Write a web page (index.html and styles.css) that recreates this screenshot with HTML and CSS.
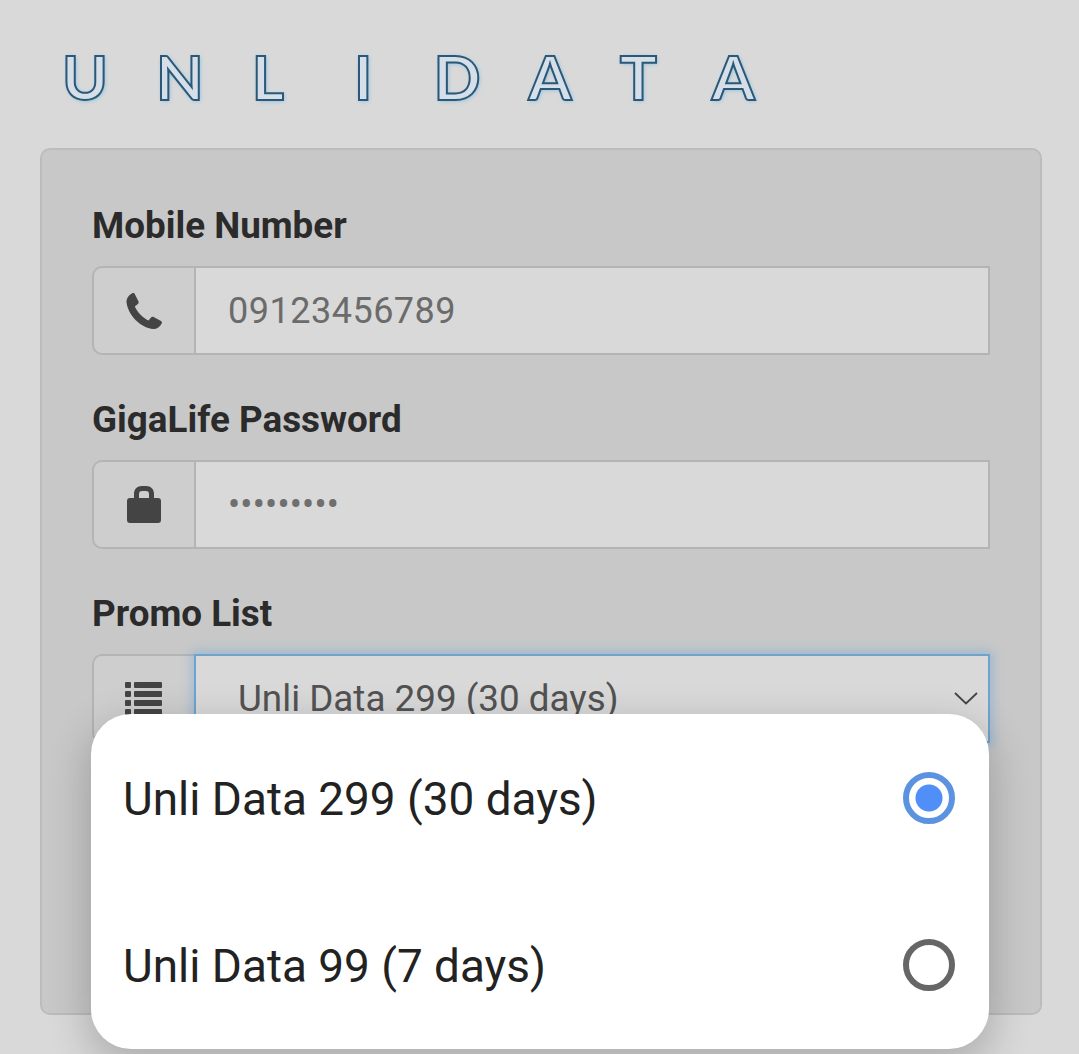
FILE: index.html
```html
<!DOCTYPE html>
<html lang="en">
<head>
    <meta charset="UTF-8">
    <title>Unli Data</title>
    <link rel="stylesheet" href="styles.css">
</head>
<body>
    <div class="page">
        <h1 class="title">UN<span class="gap-l">L</span><span class="gap-i">I</span>DA<span class="gap-t">T</span>A</h1>
        <form class="card">
            <div class="field">
                <div class="label">Mobile Number</div>
                <div class="group">
                    <div class="prepend">
                        <svg class="icon" width="36" height="36" viewBox="0 0 36 36"><path d="M8.5 .6 L12.5 8.500 c.5 1-.2 2-1.200 2.900 L8.800 13.500 C11.500 19.500 17 25 22.500 27.500 l2.100-2.500 c1-1 2-1.500 3-1 L35 28 c1 .6 1.200 1.400.7 2.400 C34 33.800 31 36 27.500 36 C14 35 1.500 21 .5 9 C.3 5.500 2.500 2.500 5.800 .5 C6.800 0 7.900 -.1 8.500 .6z"/></svg>
                    </div>
                    <div class="control placeholder">09123456789</div>
                </div>
            </div>
            <div class="field">
                <div class="label">GigaLife Password</div>
                <div class="group">
                    <div class="prepend">
                        <svg class="icon" width="34" height="37" viewBox="0 0 34 37"><path fill-rule="evenodd" d="M3 12h4V8c0-5 3-8 8-8h4c5 0 8 3 8 8v4h4c2 0 3 1 3 3v19c0 2-1 3-3 3H3c-2 0-3-1-3-3V15c0-2 1-3 3-3zM12 12h10V8c0-2-1-3-3-3h-4c-2 0-3 1-3 3z"/></svg>
                    </div>
                    <div class="control dots">•••••••••</div>
                </div>
            </div>
            <div class="field">
                <div class="label">Promo List</div>
                <div class="group">
                    <div class="prepend prepend-top">
                        <svg class="icon" width="37" height="42" viewBox="0 0 37 42">
                            <rect x="0" y="0" width="6" height="6" rx="1"/><rect x="9" y="0" width="28" height="6" rx="1"/>
                            <rect x="0" y="9" width="6" height="6" rx="1"/><rect x="9" y="9" width="28" height="6" rx="1"/>
                            <rect x="0" y="18" width="6" height="6" rx="1"/><rect x="9" y="18" width="28" height="6" rx="1"/>
                            <rect x="0" y="27" width="6" height="6" rx="1"/><rect x="9" y="27" width="28" height="6" rx="1"/>
                        </svg>
                    </div>
                    <div class="control select">
                        <span>Unli Data 299 (30 days)</span>
                        <svg width="24" height="13" viewBox="0 0 24 13"><path d="M1 1l11 10.500L23 1" fill="none" stroke="#444" stroke-width="1.800"/></svg>
                    </div>
                </div>
            </div>
        </form>
        <div class="menu">
            <div class="option">
                <span>Unli Data 299 (30 days)</span>
                <span class="radio checked"></span>
            </div>
            <div class="option">
                <span>Unli Data 99 (7 days)</span>
                <span class="radio"></span>
            </div>
        </div>
    </div>
</body>
</html>
```

FILE: styles.css
```css
*{
    margin: 0;
    padding: 0;
    box-sizing: border-box;
}
body{
    height: 1054px;
    overflow: hidden;
    background-color: #d9d9d9;
    font-family: Roboto, "Liberation Sans", sans-serif;
}
.page{
    position: relative;
    height: 1054px;
    padding: 0 37px 0 40px;
}
.title{
    height: 148px;
    padding: 36px 0 0 22px;
    font-family: Lato, sans-serif;
    font-size: 62px;
    line-height: 80px;
    font-weight: 700;
    font-kerning: none;
    letter-spacing: 48px;
    white-space: nowrap;
    color: #d6dfe7;
    -webkit-text-stroke: 2px #2a5878;
    text-shadow: 1px 1px 4px #86bde2;
}
.gap-l{
    letter-spacing: 70px;
}
.gap-i{
    letter-spacing: 61px;
}
.gap-t{
    letter-spacing: 55px;
}
.card{
    height: 867px;
    padding: 55px 50px 0;
    background-color: #c8c8c8;
    border: 2px solid #bcbcbc;
    border-radius: 10px;
}
.field{
    margin-bottom: 44px;
}
.label{
    height: 42px;
    margin-bottom: 19px;
    font-size: 36.800px;
    line-height: 42px;
    font-weight: 700;
    color: #2b2b2b;
}
.group{
    display: flex;
    height: 89px;
}
.prepend{
    display: flex;
    align-items: center;
    justify-content: center;
    width: 102px;
    padding-right: 1px;
    background-color: #cecece;
    border: 2px solid #b4b4b4;
    border-right: 0;
    border-radius: 10px 0 0 10px;
}
.prepend-top{
    align-items: flex-start;
    padding-top: 26px;
}
.icon{
    fill: #444;
}
.control{
    flex: 1;
    display: flex;
    align-items: center;
    padding-left: 32px;
    background-color: #d9d9d9;
    border: 2px solid #b4b4b4;
    color: #6b6b6b;
}
.placeholder{
    font-size: 36px;
    letter-spacing: .5px;
}
.dots{
    font-size: 36px;
    letter-spacing: .2px;
    color: #6f6f6f;
}
.select{
    justify-content: space-between;
    padding: 0 10px 0 42px;
    font-size: 36.800px;
    color: #525252;
    border-color: #6fa3cc;
    box-shadow: 0 0 10px 3px rgba(110, 165, 215, .45);
}
.menu{
    position: absolute;
    left: 91px;
    top: 714px;
    width: 898px;
    height: 335px;
    background-color: #fff;
    border-radius: 40px;
    box-shadow: 0 14px 40px 4px rgba(0, 0, 0, .2);
}
.option{
    display: flex;
    align-items: center;
    justify-content: space-between;
    height: 167px;
    padding: 0 34px 0 32px;
    font-size: 45.900px;
    color: #222;
}
.option span:first-child{
    padding-top: 3px;
}
.radio{
    width: 52px;
    height: 52px;
    border: 6px solid #666;
    border-radius: 50%;
}
.radio.checked{
    border-color: #5b93e0;
    background: radial-gradient(circle, #4f8ff7 13px, transparent 14px);
}
```
